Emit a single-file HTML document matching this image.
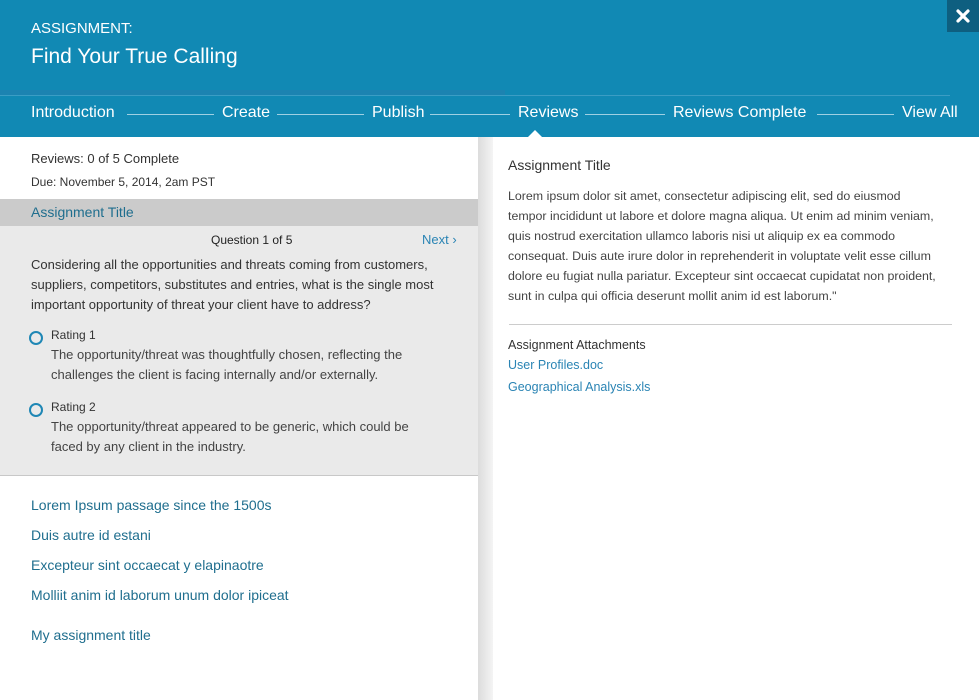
<!DOCTYPE html>
<html><head><meta charset="utf-8"><style>
*{margin:0;padding:0;box-sizing:border-box}
body{width:979px;height:700px;overflow:hidden;font-family:"Liberation Sans",sans-serif;background:#fff;position:relative}
.a{position:absolute;white-space:nowrap}
#hdr{position:absolute;left:0;top:0;width:979px;height:137px;background:#1189b4}
.nav{color:#fff;font-size:16px;top:104px}
.ln{position:absolute;top:114px;height:1px;background:#9fd0e3}
.dk{color:#333}
.lnk{color:#1f6e8e;font-size:14px}
.bl{color:#2a84b4}
</style></head><body>
<div id="hdr"></div>
<div class="a" style="left:0;top:90px;width:505px;height:5px;background:#1c83b1"></div>
<div class="a" style="left:0;top:95px;width:950px;height:1px;background:#3b9dc4"></div>
<div class="a" style="left:947px;top:0;width:32px;height:32px;background:#0e5f80"></div>
<svg class="a" style="left:956px;top:9px" width="14" height="14" viewBox="0 0 14 14"><path d="M2 2L12 12M12 2L2 12" stroke="#fff" stroke-width="3.2" stroke-linecap="round"/></svg>
<div class="a" style="left:31px;top:20px;color:#fff;font-size:15px">ASSIGNMENT:</div>
<div class="a" style="left:31px;top:45px;color:#fff;font-size:21px">Find Your True Calling</div>
<div class="a nav" style="left:31px">Introduction</div>
<div class="ln" style="left:127px;width:87px"></div>
<div class="a nav" style="left:222px">Create</div>
<div class="ln" style="left:277px;width:87px"></div>
<div class="a nav" style="left:372px">Publish</div>
<div class="ln" style="left:430px;width:80px"></div>
<div class="a nav" style="left:518px">Reviews</div>
<div class="ln" style="left:585px;width:80px"></div>
<div class="a nav" style="left:673px">Reviews Complete</div>
<div class="ln" style="left:817px;width:77px"></div>
<div class="a nav" style="left:902px">View All</div>
<div class="a" style="left:528px;top:130px;width:0;height:0;border-left:7px solid transparent;border-right:7px solid transparent;border-bottom:7px solid #fff"></div>

<div class="a" style="left:478px;top:137px;width:15px;height:563px;background:linear-gradient(90deg,#dcdcdc,#f4f4f4)"></div>

<div class="a dk" style="left:31px;top:151px;font-size:13px">Reviews: 0 of 5 Complete</div>
<div class="a dk" style="left:31px;top:175px;font-size:12px">Due: November 5, 2014, 2am PST</div>
<div class="a" style="left:0;top:199px;width:478px;height:27px;background:#cbcbcb"></div>
<div class="a" style="left:31px;top:204px;font-size:14px;color:#1f6e8e">Assignment Title</div>
<div class="a" style="left:0;top:226px;width:478px;height:250px;background:#eaeaea;border-bottom:1px solid #c8c8c8"></div>
<div class="a" style="left:211px;top:233px;font-size:12px;color:#222">Question 1 of 5</div>
<div class="a bl" style="left:422px;top:232px;font-size:13px">Next ›</div>
<div class="a dk" style="left:31px;top:255px;font-size:13px;line-height:20px">Considering all the opportunities and threats coming from customers,<br>suppliers, competitors, substitutes and entries, what is the single most<br>important opportunity of threat your client have to address?</div>
<div class="a" style="left:29px;top:331px;width:14px;height:14px;border:2px solid #1f87b5;border-radius:50%"></div>
<div class="a dk" style="left:51px;top:328px;font-size:12px">Rating 1</div>
<div class="a" style="left:51px;top:345px;font-size:13px;line-height:20px;color:#444">The opportunity/threat was thoughtfully chosen, reflecting the<br>challenges the client is facing internally and/or externally.</div>
<div class="a" style="left:29px;top:403px;width:14px;height:14px;border:2px solid #1f87b5;border-radius:50%"></div>
<div class="a dk" style="left:51px;top:400px;font-size:12px">Rating 2</div>
<div class="a" style="left:51px;top:417px;font-size:13px;line-height:20px;color:#444">The opportunity/threat appeared to be generic, which could be<br>faced by any client in the industry.</div>

<div class="a lnk" style="left:31px;top:497px">Lorem Ipsum passage since the 1500s</div>
<div class="a lnk" style="left:31px;top:527px">Duis autre id estani</div>
<div class="a lnk" style="left:31px;top:557px">Excepteur sint occaecat y elapinaotre</div>
<div class="a lnk" style="left:31px;top:587px">Molliit anim id laborum unum dolor ipiceat</div>
<div class="a lnk" style="left:31px;top:627px">My assignment title</div>

<div class="a dk" style="left:508px;top:157px;font-size:14px">Assignment Title</div>
<div class="a" style="left:508px;top:186px;font-size:12.4px;line-height:20px;color:#444">Lorem ipsum dolor sit amet, consectetur adipiscing elit, sed do eiusmod<br>tempor incididunt ut labore et dolore magna aliqua. Ut enim ad minim veniam,<br>quis nostrud exercitation ullamco laboris nisi ut aliquip ex ea commodo<br>consequat. Duis aute irure dolor in reprehenderit in voluptate velit esse cillum<br>dolore eu fugiat nulla pariatur. Excepteur sint occaecat cupidatat non proident,<br>sunt in culpa qui officia deserunt mollit anim id est laborum."</div>
<div class="a" style="left:509px;top:324px;width:443px;height:1px;background:#ccc"></div>
<div class="a dk" style="left:508px;top:338px;font-size:12.5px">Assignment Attachments</div>
<div class="a bl" style="left:508px;top:358px;font-size:12.5px">User Profiles.doc</div>
<div class="a bl" style="left:508px;top:380px;font-size:12.5px">Geographical Analysis.xls</div>
</body></html>
